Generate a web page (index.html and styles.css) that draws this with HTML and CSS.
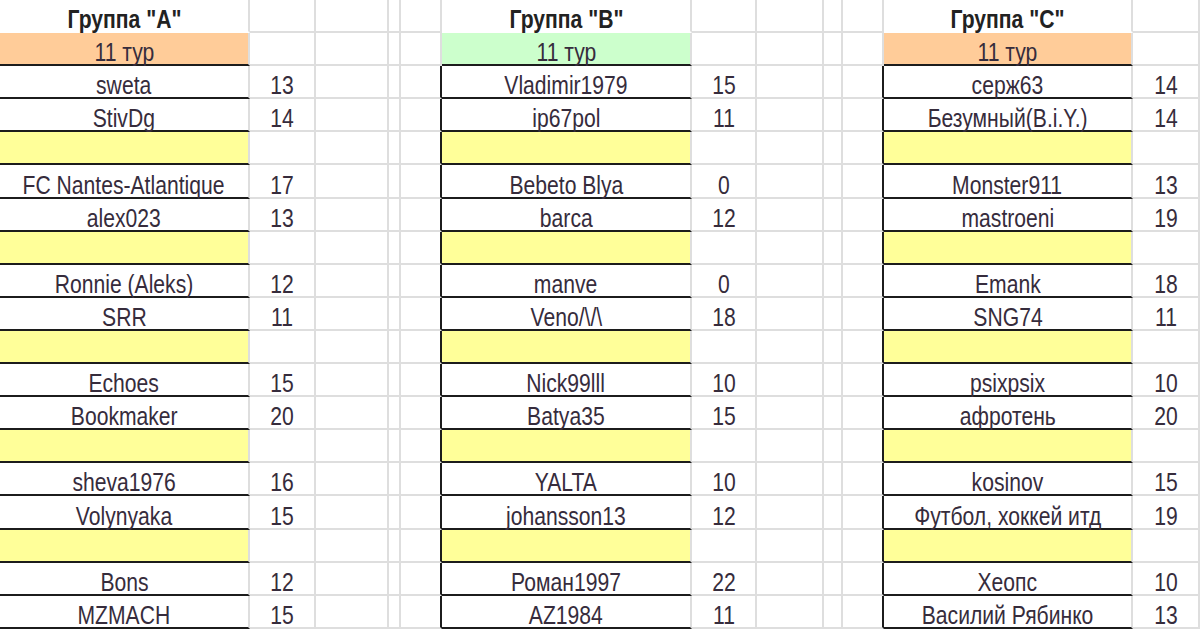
FILE: index.html
```html
<!DOCTYPE html>
<html lang="ru">
<head>
<meta charset="utf-8">
<title>Группы — 11 тур</title>
<link rel="stylesheet" href="styles.css">
</head>
<body>
<div class="sheet">
<!-- row 0 -->
<div class="h"><span>Группа "A"</span></div><div></div><div></div><div></div><div></div>
<div class="h"><span>Группа "B"</span></div><div></div><div></div><div></div><div></div>
<div class="h"><span>Группа "C"</span></div><div></div>
<!-- row 1 -->
<div class="n or"><span>11 тур</span></div><div></div><div></div><div></div><div></div>
<div class="n gr"><span>11 тур</span></div><div></div><div></div><div></div><div></div>
<div class="n or"><span>11 тур</span></div><div></div>
<!-- row 2 -->
<div class="n"><span>sweta</span></div><div><span>13</span></div><div></div><div></div><div class="bk"></div>
<div class="n"><span>Vladimir1979</span></div><div><span>15</span></div><div></div><div></div><div class="bk"></div>
<div class="n"><span>серж63</span></div><div><span>14</span></div>
<!-- row 3 -->
<div class="n"><span>StivDg</span></div><div><span>14</span></div><div></div><div></div><div class="bk"></div>
<div class="n"><span>ip67pol</span></div><div><span>11</span></div><div></div><div></div><div class="bk"></div>
<div class="n"><span>Безумный(B.i.Y.)</span></div><div><span>14</span></div>
<!-- row 4 -->
<div class="n ye"></div><div></div><div></div><div></div><div class="bk"></div>
<div class="n ye"></div><div></div><div></div><div></div><div class="bk"></div>
<div class="n ye"></div><div></div>
<!-- row 5 -->
<div class="n"><span>FC Nantes-Atlantique</span></div><div><span>17</span></div><div></div><div></div><div class="bk"></div>
<div class="n"><span>Bebeto Blya</span></div><div><span>0</span></div><div></div><div></div><div class="bk"></div>
<div class="n"><span>Monster911</span></div><div><span>13</span></div>
<!-- row 6 -->
<div class="n"><span>alex023</span></div><div><span>13</span></div><div></div><div></div><div class="bk"></div>
<div class="n"><span>barca</span></div><div><span>12</span></div><div></div><div></div><div class="bk"></div>
<div class="n"><span>mastroeni</span></div><div><span>19</span></div>
<!-- row 7 -->
<div class="n ye"></div><div></div><div></div><div></div><div class="bk"></div>
<div class="n ye"></div><div></div><div></div><div></div><div class="bk"></div>
<div class="n ye"></div><div></div>
<!-- row 8 -->
<div class="n"><span>Ronnie (Aleks)</span></div><div><span>12</span></div><div></div><div></div><div class="bk"></div>
<div class="n"><span>manve</span></div><div><span>0</span></div><div></div><div></div><div class="bk"></div>
<div class="n"><span>Emank</span></div><div><span>18</span></div>
<!-- row 9 -->
<div class="n"><span>SRR</span></div><div><span>11</span></div><div></div><div></div><div class="bk"></div>
<div class="n"><span>Veno/\/\</span></div><div><span>18</span></div><div></div><div></div><div class="bk"></div>
<div class="n"><span>SNG74</span></div><div><span>11</span></div>
<!-- row 10 -->
<div class="n ye"></div><div></div><div></div><div></div><div class="bk"></div>
<div class="n ye"></div><div></div><div></div><div></div><div class="bk"></div>
<div class="n ye"></div><div></div>
<!-- row 11 -->
<div class="n"><span>Echoes</span></div><div><span>15</span></div><div></div><div></div><div class="bk"></div>
<div class="n"><span>Nick99lll</span></div><div><span>10</span></div><div></div><div></div><div class="bk"></div>
<div class="n"><span>psixpsix</span></div><div><span>10</span></div>
<!-- row 12 -->
<div class="n"><span>Bookmaker</span></div><div><span>20</span></div><div></div><div></div><div class="bk"></div>
<div class="n"><span>Batya35</span></div><div><span>15</span></div><div></div><div></div><div class="bk"></div>
<div class="n"><span>афротень</span></div><div><span>20</span></div>
<!-- row 13 -->
<div class="n ye"></div><div></div><div></div><div></div><div class="bk"></div>
<div class="n ye"></div><div></div><div></div><div></div><div class="bk"></div>
<div class="n ye"></div><div></div>
<!-- row 14 -->
<div class="n"><span>sheva1976</span></div><div><span>16</span></div><div></div><div></div><div class="bk"></div>
<div class="n"><span>YALTA</span></div><div><span>10</span></div><div></div><div></div><div class="bk"></div>
<div class="n"><span>kosinov</span></div><div><span>15</span></div>
<!-- row 15 -->
<div class="n"><span>Volynyaka</span></div><div><span>15</span></div><div></div><div></div><div class="bk"></div>
<div class="n"><span>johansson13</span></div><div><span>12</span></div><div></div><div></div><div class="bk"></div>
<div class="n"><span>Футбол, хоккей итд</span></div><div><span>19</span></div>
<!-- row 16 -->
<div class="n ye"></div><div></div><div></div><div></div><div class="bk"></div>
<div class="n ye"></div><div></div><div></div><div></div><div class="bk"></div>
<div class="n ye"></div><div></div>
<!-- row 17 -->
<div class="n"><span>Bons</span></div><div><span>12</span></div><div></div><div></div><div class="bk"></div>
<div class="n"><span>Роман1997</span></div><div><span>22</span></div><div></div><div></div><div class="bk"></div>
<div class="n"><span>Хеопс</span></div><div><span>10</span></div>
<!-- row 18 -->
<div class="n"><span>MZMACH</span></div><div><span>15</span></div><div></div><div></div><div class="bk"></div>
<div class="n"><span>AZ1984</span></div><div><span>11</span></div><div></div><div></div><div class="bk"></div>
<div class="n"><span>Василий Рябинко</span></div><div><span>13</span></div>
</div>
</body>
</html>
```

FILE: styles.css
```css
* {
  box-sizing: border-box;
  margin: 0;
  padding: 0;
}

html,
body {
  width: 1200px;
  height: 630px;
  overflow: hidden;
  background: #ffffff;
}

body {
  font-family: "Liberation Sans", Arial, sans-serif;
  font-size: 25px;
  color: #362c3c;
}

.sheet {
  display: grid;
  grid-template-columns: 250px 66px 73px 12px 41px 250px 65px 67px 19px 41px 249px 67px;
  grid-auto-rows: 33.1px;
}

.sheet > div {
  display: flex;
  align-items: flex-end;
  justify-content: center;
  border-right: 2px solid #dedede;
  border-bottom: 2px solid #dedede;
}

.sheet span {
  display: inline-block;
  white-space: nowrap;
  line-height: 23px;
  transform: scaleX(0.845);
}

.sheet > .h {
  border-bottom-color: #ffffff;
  font-weight: bold;
  color: #222222;
}

.sheet > .n {
  border-bottom-color: #1c1c1c;
}

.sheet > .bk {
  border-right-color: #1c1c1c;
}

.or {
  background: #ffcc99;
}

.gr {
  background: #ccffcc;
}

.ye {
  background: #ffff99;
}
```
